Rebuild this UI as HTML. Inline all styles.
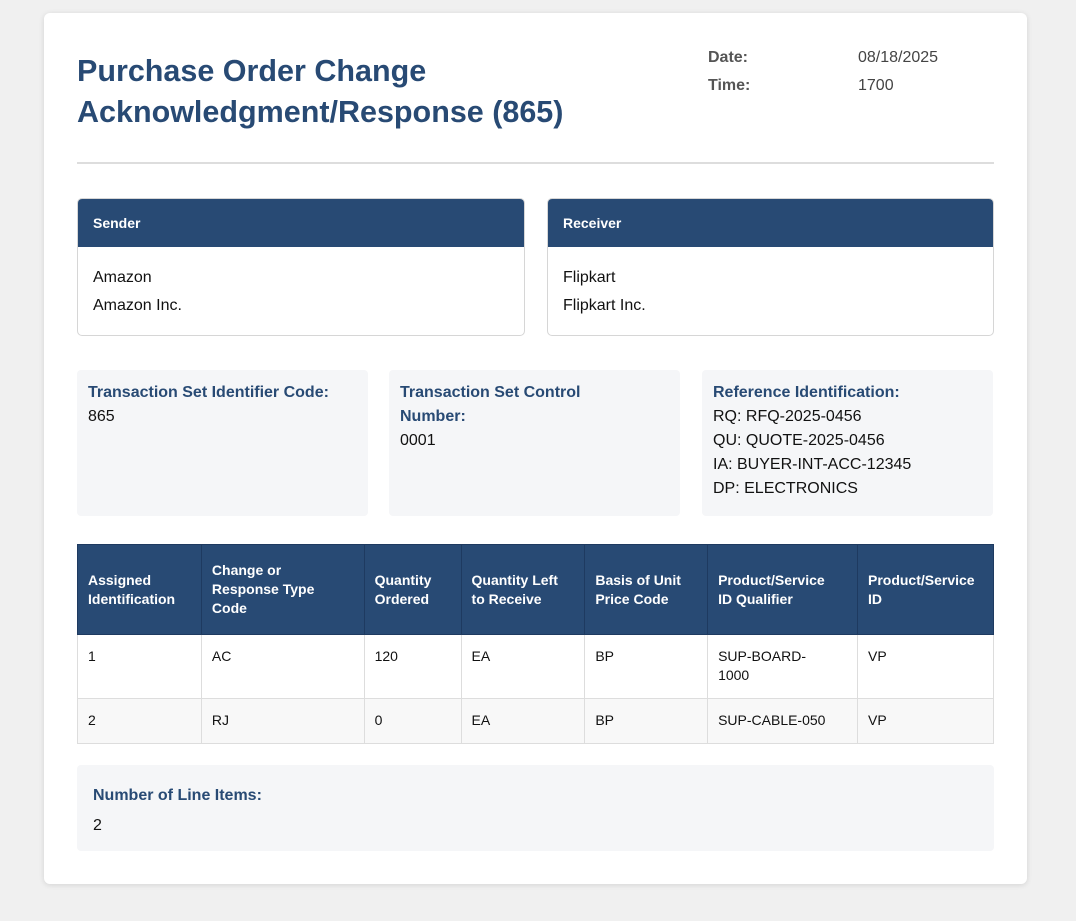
<!DOCTYPE html><html><head><style>
*{margin:0;padding:0;box-sizing:border-box}
body{width:1076px;height:921px;background:#f0f0f0;font-family:"Liberation Sans",Arial,sans-serif;position:relative;color:#111}
.card{position:absolute;left:44px;top:13px;width:983px;height:871px;background:#fff;border-radius:6px;box-shadow:0 1px 6px rgba(0,0,0,.12)}
.a{position:absolute}
h1{position:absolute;left:77px;top:51px;font-size:30.5px;line-height:41px;color:#284a74;font-weight:bold}
.lab{font-weight:bold;color:#555;font-size:16px}
.party{position:absolute;top:198px;height:138px;border:1px solid #d6d6d6;border-radius:5px;overflow:hidden}
.party .h{background:#284a74;color:#fff;font-weight:bold;font-size:14px;height:48px;padding:16px 15px}
.party .b{padding:17px 15px;font-size:16px;line-height:28px}
.info{position:absolute;top:370px;height:146px;width:291px;background:#f5f6f8;border-radius:4px;padding:11px 11px;font-size:16px;line-height:24px}
.info b{color:#284a74;display:block}
table{position:absolute;left:77px;top:544px;width:917px;border-collapse:collapse;font-size:14px}
th{background:#284a74;color:#fff;text-align:left;vertical-align:middle;height:90px;padding:0 10px;border:1px solid #1e3a60;line-height:19px}
td{border:1px solid #ddd;padding:0 10px;vertical-align:top;padding-top:12px;line-height:19px}
tr.r1 td{height:64px}tr.r2 td{height:45px;background:#f8f8f8}
</style></head><body>
<div class="card"></div>
<h1>Purchase Order Change<br>Acknowledgment/Response (865)</h1>
<div class="a lab" style="left:708px;top:49px">Date:</div><div class="a" style="left:858px;top:49px;font-size:16px;color:#444">08/18/2025</div>
<div class="a lab" style="left:708px;top:77px">Time:</div><div class="a" style="left:858px;top:77px;font-size:16px;color:#444">1700</div>
<div class="a" style="left:77px;top:162px;width:917px;height:2px;background:#ddd"></div>
<div class="party" style="left:77px;width:448px"><div class="h">Sender</div><div class="b">Amazon<br>Amazon Inc.</div></div>
<div class="party" style="left:547px;width:447px"><div class="h">Receiver</div><div class="b">Flipkart<br>Flipkart Inc.</div></div>
<div class="info" style="left:77px"><b>Transaction Set Identifier Code:</b>865</div>
<div class="info" style="left:389px"><b>Transaction Set Control<br>Number:</b>0001</div>
<div class="info" style="left:702px"><b>Reference Identification:</b>RQ: RFQ-2025-0456<br>QU: QUOTE-2025-0456<br>IA: BUYER-INT-ACC-12345<br>DP: ELECTRONICS</div>
<table>
<colgroup><col style="width:124px"><col style="width:163px"><col style="width:97px"><col style="width:124px"><col style="width:123px"><col style="width:150px"><col style="width:136px"></colgroup>
<tr><th>Assigned<br>Identification</th><th>Change or<br>Response Type<br>Code</th><th>Quantity<br>Ordered</th><th>Quantity Left<br>to Receive</th><th>Basis of Unit<br>Price Code</th><th>Product/Service<br>ID Qualifier</th><th>Product/Service<br>ID</th></tr>
<tr class="r1"><td>1</td><td>AC</td><td>120</td><td>EA</td><td>BP</td><td>SUP-BOARD-<br>1000</td><td>VP</td></tr>
<tr class="r2"><td>2</td><td>RJ</td><td>0</td><td>EA</td><td>BP</td><td>SUP-CABLE-050</td><td>VP</td></tr>
</table>
<div class="info" style="left:77px;top:765px;width:917px;height:86px;padding:16px 16px;line-height:30px"><b>Number of Line Items:</b>2</div>
</body></html>
